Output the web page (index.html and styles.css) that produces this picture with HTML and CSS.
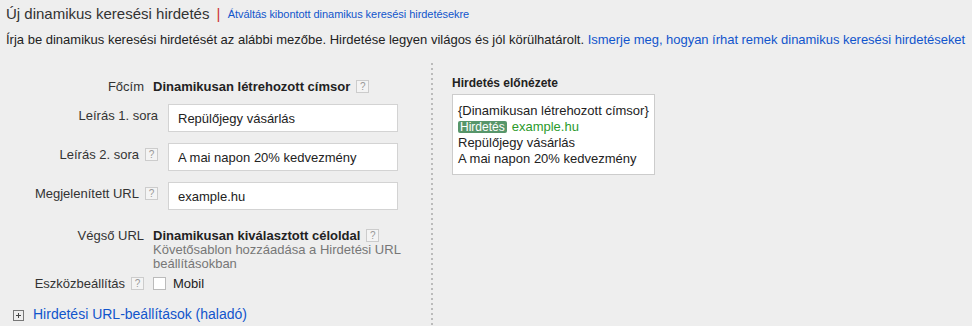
FILE: index.html
```html
<html>
    <head>
        <meta charset="utf-8">
        <title>Új dinamikus keresési hirdetés</title>
        <link rel="stylesheet" href="styles.css">
    </head>
    <body>
        <div class="header">
            <h1 class="title">Új dinamikus keresési hirdetés <span class="sep">|</span> <a class="switch" href="#">Átváltás kibontott dinamikus keresési hirdetésekre</a></h1>
            <p class="intro">Írja be dinamikus keresési hirdetését az alábbi mezőbe. Hirdetése legyen világos és jól körülhatárolt. <a href="#">Ismerje meg, hogyan írhat remek dinamikus keresési hirdetéseket</a></p>
        </div>
        <div class="main">
            <div class="form">
                <div class="row first">
                    <div class="label">Főcím</div>
                    <div class="value"><b>Dinamikusan létrehozott címsor</b><span class="help">?</span></div>
                </div>
                <div class="row field">
                    <div class="label">Leírás 1. sora</div>
                    <input class="text" type="text" value="Repülőjegy vásárlás">
                </div>
                <div class="row field">
                    <div class="label">Leírás 2. sora<span class="help">?</span></div>
                    <input class="text" type="text" value="A mai napon 20% kedvezmény">
                </div>
                <div class="row field">
                    <div class="label">Megjelenített URL<span class="help">?</span></div>
                    <input class="text" type="text" value="example.hu">
                </div>
                <div class="row final">
                    <div class="label">Végső URL</div>
                    <div class="value">
                        <div><b>Dinamikusan kiválasztott céloldal</b><span class="help">?</span></div>
                        <div class="note">Követősablon hozzáadása a Hirdetési URL beállításokban</div>
                    </div>
                </div>
                <div class="row device">
                    <div class="label">Eszközbeállítás<span class="help">?</span></div>
                    <div class="value"><span class="check"></span>Mobil</div>
                </div>
                <div class="advanced">
                    <span class="plus"></span><a href="#">Hirdetési URL-beállítások (haladó)</a>
                </div>
            </div>
            <div class="divider"></div>
            <div class="preview">
                <div class="preview-title">Hirdetés előnézete</div>
                <div class="ad">
                    <div>{Dinamikusan létrehozott címsor}</div>
                    <div><span class="badge">Hirdetés</span><span class="url">example.hu</span></div>
                    <div>Repülőjegy vásárlás</div>
                    <div>A mai napon 20% kedvezmény</div>
                </div>
            </div>
        </div>
    </body>
</html>
```
FILE: styles.css
```css
body {
    margin: 0;
    background-color: #eee;
    color: #222;
    font-family: "Liberation Sans", Arial, sans-serif;
    font-size: 13px;
    overflow: hidden;
}
a {
    color: #15c;
    text-decoration: none;
}
.header {
    padding: 2px 6px 0 6px;
}
.title {
    margin: 0;
    font-size: 15px;
    font-weight: normal;
    color: #333;
    line-height: 24px;
}
.sep {
    color: #c33;
    margin: 0 3px;
}
.switch {
    font-size: 11px;
    letter-spacing: -0.05px;
    vertical-align: 1px;
}
.intro {
    margin: 6px 0 0 0;
    line-height: 15px;
    white-space: nowrap;
}
.intro a {
    letter-spacing: -0.03px;
}

.main {
    display: flex;
    margin-top: 16px;
    height: 280px;
}
.form {
    width: 431px;
    padding-top: 16px;
}
.row {
    display: flex;
    line-height: 15px;
}
.label {
    width: 144px;
    text-align: right;
    color: #333;
    flex-shrink: 0;
}
.value {
    margin-left: 9px;
}
.field {
    margin-top: 11px;
}
.row.first + .field {
    margin-top: 10px;
}
.field .label {
    width: 158px;
    padding-top: 4px;
}
.text {
    margin-left: 10px;
    width: 230px;
    height: 28px;
    box-sizing: border-box;
    border: 1px solid #d3d3d3;
    padding: 0 9px;
    font-family: inherit;
    font-size: 13px;
    color: #222;
    outline: none;
}
.final {
    margin-top: 19px;
    line-height: 14px;
}
.note {
    color: #777;
    width: 250px;
}
.device {
    margin-top: 5px;
}
.help {
    display: inline-block;
    width: 11px;
    height: 11px;
    line-height: 11px;
    margin: 1px 0 0 6px;
    border: 1px solid #ccc;
    background-color: #f4f4f4;
    color: #999;
    font-size: 10px;
    text-align: center;
    font-weight: normal;
    vertical-align: top;
}
.final .help {
    margin-top: 0;
}
.check {
    display: inline-block;
    width: 11px;
    height: 11px;
    border: 1px solid #bbb;
    background-color: #fff;
    margin: 1px 7px 0 0;
    vertical-align: top;
}
.advanced {
    margin: 16px 0 0 13px;
    line-height: 15px;
    font-size: 14px;
}
.plus {
    display: inline-block;
    position: relative;
    width: 9px;
    height: 9px;
    border: 1px solid #777;
    margin: 3px 9px 0 0;
    vertical-align: top;
}
.plus::before, .plus::after {
    content: "";
    position: absolute;
    background-color: #444;
}
.plus::before {
    left: 2px;
    top: 4px;
    width: 5px;
    height: 1px;
}
.plus::after {
    left: 4px;
    top: 2px;
    width: 1px;
    height: 5px;
}
.divider {
    width: 2px;
    background-image: linear-gradient(#bbb 2px, transparent 2px);
    background-size: 2px 5px;
}
.preview {
    padding: 13px 0 0 19px;
}
.preview-title {
    font-weight: bold;
    font-size: 12px;
    line-height: 15px;
    margin-bottom: 3px;
}
.ad {
    width: 191px;
    border: 1px solid #ccc;
    background-color: #fff;
    padding: 8px 5px 7px 5px;
    line-height: 16px;
    color: #222;
}
.badge {
    display: inline-block;
    background-color: #57966a;
    color: #fff;
    font-size: 12px;
    line-height: 12px;
    padding: 0 2px;
    border-radius: 2px;
    margin-right: 5px;
}
.url {
    color: #2b9a2b;
}
```
